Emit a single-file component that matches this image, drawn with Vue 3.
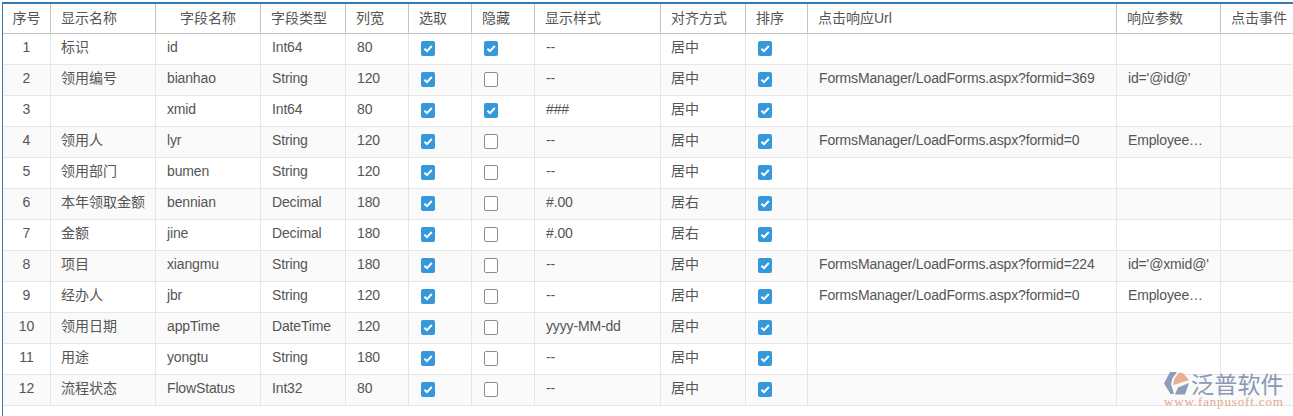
<script setup>
const cols = [48, 105, 105, 85, 63, 63, 63, 126, 85, 62, 309, 104, 90]
const heads = [
  { t: '序号', c: 'center tight' }, { t: '显示名称' }, { t: '字段名称', c: 'center' }, { t: '字段类型' },
  { t: '列宽' }, { t: '选取' }, { t: '隐藏' }, { t: '显示样式' }, { t: '对齐方式' }, { t: '排序' },
  { t: '点击响应Url' }, { t: '响应参数' }, { t: '点击事件' }
]
const u = 'FormsManager/LoadForms.aspx?formid='
const rows = [
  ['1', '标识', 'id', 'Int64', '80', true, '--', '居中', '', ''],
  ['2', '领用编号', 'bianhao', 'String', '120', false, '--', '居中', u + '369', "id='@id@'"],
  ['3', '', 'xmid', 'Int64', '80', true, '###', '居中', '', ''],
  ['4', '领用人', 'lyr', 'String', '120', false, '--', '居中', u + '0', "EmployeeCode='@lyr@'"],
  ['5', '领用部门', 'bumen', 'String', '120', false, '--', '居中', '', ''],
  ['6', '本年领取金额', 'bennian', 'Decimal', '180', false, '#.00', '居右', '', ''],
  ['7', '金额', 'jine', 'Decimal', '180', false, '#.00', '居右', '', ''],
  ['8', '项目', 'xiangmu', 'String', '180', false, '--', '居中', u + '224', "id='@xmid@'"],
  ['9', '经办人', 'jbr', 'String', '120', false, '--', '居中', u + '0', "EmployeeCode='@jbr@'"],
  ['10', '领用日期', 'appTime', 'DateTime', '120', false, 'yyyy-MM-dd', '居中', '', ''],
  ['11', '用途', 'yongtu', 'String', '180', false, '--', '居中', '', ''],
  ['12', '流程状态', 'FlowStatus', 'Int32', '80', false, '--', '居中', '', '']
]
</script>

<template>
  <div class="page">
    <div class="frame">
      <table class="grid">
        <colgroup>
          <col v-for="(w, i) in cols" :key="i" :style="{ width: w + 'px' }" />
        </colgroup>
        <thead>
          <tr>
            <th v-for="h in heads" :key="h.t" :class="h.c">{{ h.t }}</th>
          </tr>
        </thead>
        <tbody>
          <tr v-for="r in rows" :key="r[0]">
            <td class="center">{{ r[0] }}</td>
            <td class="cjk">{{ r[1] }}</td>
            <td class="latin">{{ r[2] }}</td>
            <td class="latin">{{ r[3] }}</td>
            <td class="latin">{{ r[4] }}</td>
            <td class="box"><span class="cb on"><svg viewBox="0 0 14 15"><path d="M3.4 7.8 6 10.2 10.8 5" /></svg></span></td>
            <td class="box">
              <span class="cb" :class="{ on: r[5] }"><svg v-if="r[5]" viewBox="0 0 14 15"><path d="M3.4 7.8 6 10.2 10.8 5" /></svg></span>
            </td>
            <td class="latin">{{ r[6] }}</td>
            <td class="cjk">{{ r[7] }}</td>
            <td class="box"><span class="cb on"><svg viewBox="0 0 14 15"><path d="M3.4 7.8 6 10.2 10.8 5" /></svg></span></td>
            <td class="latin">{{ r[8] }}</td>
            <td class="latin">{{ r[9] }}</td>
            <td></td>
          </tr>
        </tbody>
      </table>
    </div>
    <div class="logo">
      <div class="top">
        <svg class="mark" viewBox="0 0 25 23">
          <path class="m1" d="M6 0H13L8.5 6 7 12 10 22H6.5L0 11.5Z" />
          <path class="m2" d="M15 0.5 19 1 25 8 13 12 9 13 10.5 6.5Z" />
          <path class="m1" d="M11 22.5 14 15.5 25 11 21 22.5Z" />
        </svg>
        <div class="cn">泛普软件</div>
      </div>
      <div class="en">www.fanpusoft.com</div>
    </div>
  </div>
</template>

<style>
html, body { margin: 0; background: #fff; }
</style>

<style scoped>
.page {
  position: relative;
  width: 1293px;
  height: 416px;
  padding-top: 2px;
  box-sizing: border-box;
  overflow: hidden;
  font-family: "Liberation Sans", "Noto Sans CJK SC", sans-serif;
  font-size: 14px;
  color: #555;
}
.frame {
  margin-left: 2px;
  height: 414px;
  border-left: 1px solid #337ab7;
  border-top: 2px solid #337ab7;
  box-sizing: border-box;
  overflow: hidden;
}
.grid {
  table-layout: fixed;
  width: 1308px;
  border-collapse: separate;
  border-spacing: 0;
}
th, td {
  box-sizing: border-box;
  padding: 0 10px;
  text-align: left;
  white-space: nowrap;
  overflow: hidden;
  text-overflow: ellipsis;
  border-right: 1px solid #e6e6e6;
  border-bottom: 1px solid #e6e6e6;
  font-weight: 400;
}
th {
  height: 30px;
  padding-bottom: 4px;
  border-right-color: #c4c4c4;
  border-bottom-color: #c4c4c4;
}
th.tight { padding-left: 0; padding-right: 0; }
td {
  height: 31px;
  padding-bottom: 5px;
}
tbody tr:nth-child(even) td { background: #fafafa; }
th.center, td.center { text-align: center; }
td.cjk { padding-bottom: 7px; }
td.latin { padding-left: 11px; letter-spacing: -0.15px; }
td.box { padding: 0 0 1px 12px; }
.cb {
  display: block;
  width: 14px;
  height: 15px;
  box-sizing: border-box;
  border: 1px solid #8c8c8c;
  border-radius: 2px;
  background: #fff;
}
.cb.on { border: 0; background: #3498db; }
.cb svg { display: block; width: 14px; height: 15px; }
.cb path { fill: none; stroke: #fff; stroke-width: 2; }
.logo {
  position: absolute;
  left: 1164px;
  top: 371px;
  width: 125px;
  opacity: 0.9;
}
.top { display: flex; align-items: flex-start; height: 25px; }
.mark { width: 25px; height: 23px; margin-top: 1px; flex: none; }
.m1 { fill: #8094b4; }
.m2 { fill: #e3a98a; }
.cn {
  font-family: "Noto Sans CJK SC", sans-serif;
  font-size: 23px;
  line-height: 24px;
  letter-spacing: 0.2px;
  margin-left: 2px;
  color: #7d8fae;
}
.en {
  font-family: "Liberation Serif", serif;
  font-size: 13px;
  line-height: 11px;
  letter-spacing: 0.85px;
  color: #e2a183;
}
</style>
